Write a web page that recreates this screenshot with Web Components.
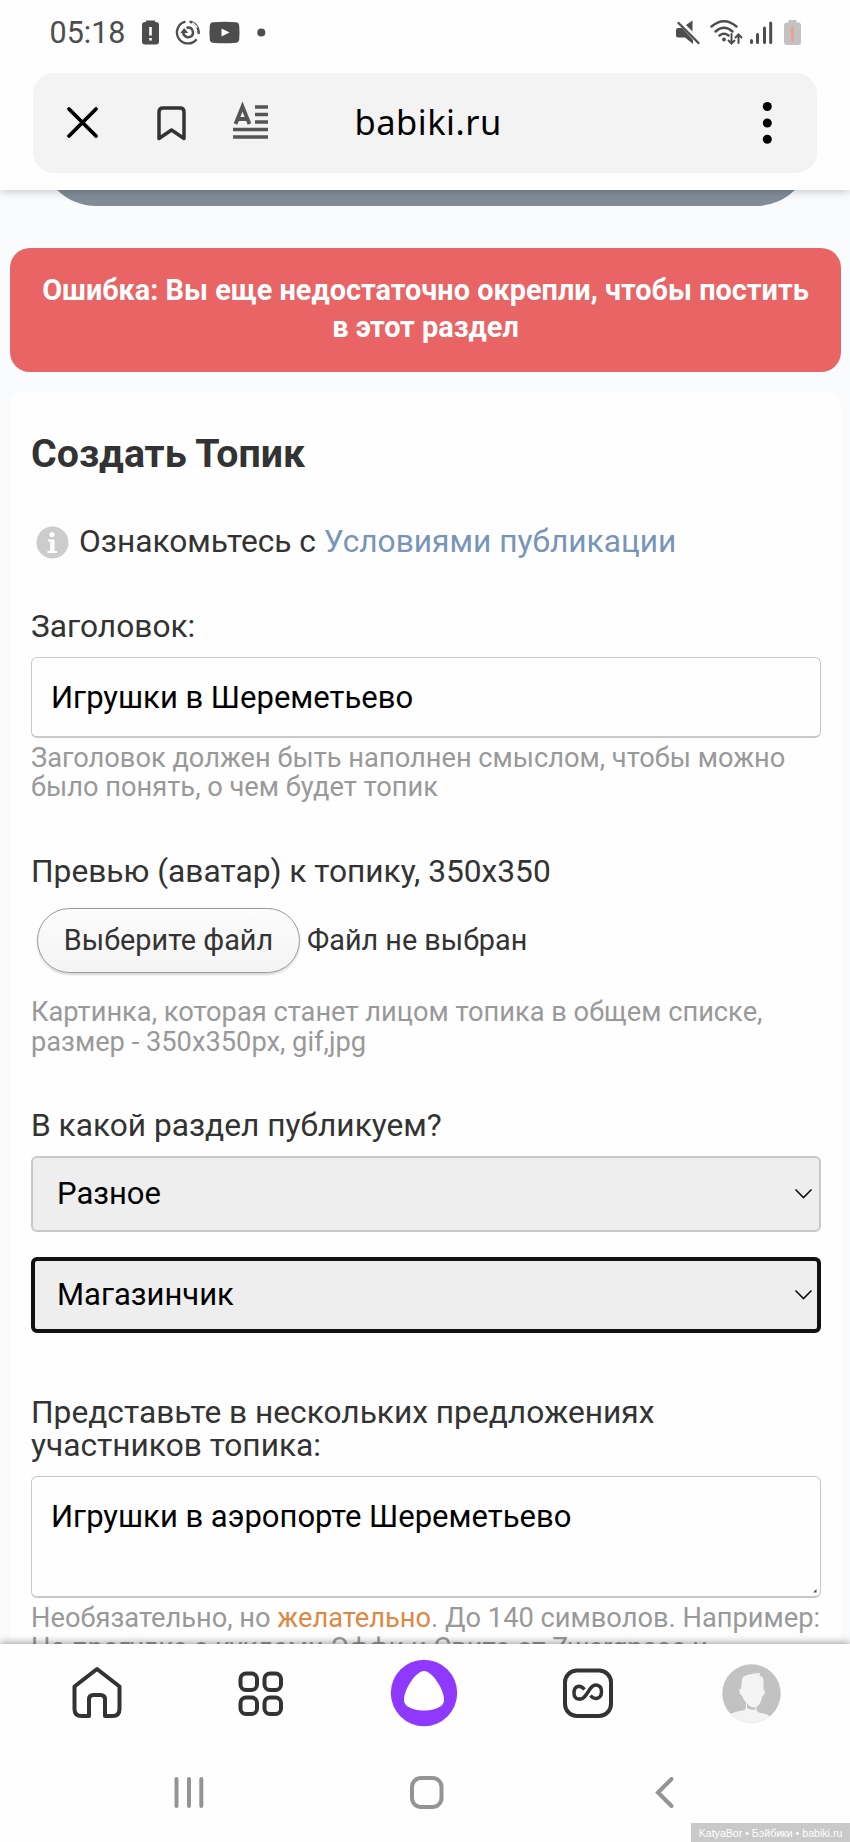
<!DOCTYPE html>
<html lang="ru">
<head>
<meta charset="utf-8">
<title>babiki.ru</title>
<style>
body { margin: 0; }
form-field b { font-weight: 400; color: #dd8844; }
</style>
</head>
<body>
<phone-screen>
    <status-bar slot="top"></status-bar>
    <url-bar slot="top">babiki.ru</url-bar>

    <cut-pill></cut-pill>
    <error-box>Ошибка: Вы еще недостаточно окрепли, чтобы постить в этот раздел</error-box>
    <topic-card>
        <span slot="title">Создать Топик</span>
        <info-line>Ознакомьтесь с <a>Условиями публикации</a></info-line>
        <form-field>
            <span slot="label">Заголовок:</span>
            <text-box>Игрушки в Шереметьево</text-box>
            <span slot="hint">Заголовок должен быть наполнен смыслом, чтобы можно было понять, о чем будет топик</span>
        </form-field>
        <form-field>
            <span slot="label">Превью (аватар) к топику, 350x350</span>
            <file-picker>Выберите файл<span slot="state">Файл не выбран</span></file-picker>
            <span slot="hint">Картинка, которая станет лицом топика в общем списке, размер - 350x350px, gif,jpg</span>
        </form-field>
        <form-field wide>
            <span slot="label">В какой раздел публикуем?</span>
            <select-box>Разное</select-box>
            <select-box focused>Магазинчик</select-box>
        </form-field>
        <form-field>
            <span slot="label">Представьте в нескольких предложениях участников топика:</span>
            <text-box multiline>Игрушки в аэропорте Шереметьево</text-box>
            <span slot="hint">Необязательно, но <b>желательно</b>. До 140 символов. Например: На прогулке с куклами Эффи и Свита от Zwergnase и</span>
        </form-field>
    </topic-card>

    <tab-bar slot="bottom"></tab-bar>
    <nav-bar slot="bottom">KatyaBor • Бэйбики • babiki.ru</nav-bar>
</phone-screen>

<script>
// Petite base : chaque composant fournit son HTML
class BaseElement extends HTMLElement {
    constructor() {
        super();
        this.attachShadow({ mode: 'open' });
    }

    connectedCallback() {
        this.shadowRoot.innerHTML = this.render();
    }
}

class PhoneScreen extends BaseElement {
    render() {
        return `
            <style>
                :host { display: flex; flex-direction: column; width: 850px; height: 1842px; overflow: hidden; background: #fefefe; font-family: Roboto, "Noto Sans", sans-serif; color: #333; }
                .top, .bottom { position: relative; z-index: 1; background: #fefefe; }
                .top { height: 190px; box-shadow: 0 1px 9px rgba(0, 0, 0, .24); }
                .view { flex: 1; min-height: 0; overflow: hidden; background: #f9fbfd; }
                .bottom { height: 198px; box-shadow: 0 -1px 8px rgba(0, 0, 0, .4); }
            </style>
            <div class="top"><slot name="top"></slot></div>
            <div class="view"><slot></slot></div>
            <div class="bottom"><slot name="bottom"></slot></div>
        `;
    }
}
customElements.define('phone-screen', PhoneScreen);

class StatusBar extends BaseElement {
    render() {
        return `
            <style>
                :host { display: flex; justify-content: space-between; height: 73px; color: #4d4d4d; }
                .time { font-size: 30.500px; line-height: 65px; padding-left: 49.500px; width: 90.500px; white-space: nowrap; }
                .left { display: flex; }
                svg { display: block; }
            </style>
            <div class="left">
                <span class="time">05:18</span>
                <svg width="130" height="73" viewBox="140 0 130 73" fill="#4d4d4d">
                    <path d="M146 22v-1.500h9v1.500h1q3 0 3 3v16.500q0 3-3 3h-11q-3 0-3-3V25q0-3 3-3z"/>
                    <path d="M150.500 27v8.500M150.500 38v2.500" stroke="#fff" stroke-width="2.600" fill="none"/>
                    <g fill="none" stroke="#4d4d4d" stroke-width="2.300">
                        <path d="M185.500 21.700A11 11 0 1 0 196.600 39.200M198.600 34A11 11 0 0 0 189.500 21.600"/>
                        <path d="M186.500 28c3.500-1.500 6.500 1 6.500 4.500 0 4.500-5 6-8 3.500-1.500-1.200-2-2.500-1.500-4.500" stroke-width="2.500"/>
                    </g>
                    <path d="M180.200 33l4-5 4 5z"/>
                    <path d="M192.300 22.500l5 5" stroke="#fefefe" stroke-width="1.500"/>
                    <path d="M213 22.300q11.500-1 23 0 3 .2 3.200 3.200.6 7 0 14-.2 3-3.200 3.200-11.500 1-23 0-3-.2-3.200-3.200-.6-7 0-14 .2-3 3.200-3.200z"/>
                    <path d="M221.500 28.500v8l8-4z" fill="#fff"/>
                    <circle cx="261.300" cy="32.500" r="4"/>
                </svg>
            </div>
            <svg width="180" height="73" viewBox="670 0 180 73" fill="#4d4d4d">
                <path d="M676 30q0-2 2-2h4l11 12v4l-8-6.500h-7q-2 0-2-2zM686 25l6.500-4.500v11z"/>
                <path d="M678.500 23l20 20" stroke="#4d4d4d" stroke-width="2.400" stroke-linecap="round"/>
                <g fill="none" stroke="#4d4d4d" stroke-width="2.500" stroke-linecap="round">
                    <path d="M711.500 26.500q12.500-10.500 25 0M715.500 31.500q8.500-7.500 17 0M719.500 35.500q4.500-3.500 9 0"/>
                    <path d="M731.500 34v9M728.500 40.500l3 3 3-3M738.500 43v-8M735.500 37.500l3-3 3 3" stroke-width="2"/>
                    <path d="M751.500 40.500v2M757.500 34.500v8M764.500 28v14.500M770.700 23v19.500" stroke-width="3"/>
                </g>
                <circle cx="724" cy="39.500" r="1.900"/>
                <path d="M788.500 22.500V20h8v2.500h1.500q3 0 3 3V42q0 3-3 3h-11q-3 0-3-3V25.500q0-3 3-3z" fill="#c2c2c2"/>
                <path d="M792.500 28v8M792.500 38.500v2" stroke="#ee9f90" stroke-width="3" stroke-linecap="round"/>
            </svg>
        `;
    }
}
customElements.define('status-bar', StatusBar);

class UrlBar extends BaseElement {
    render() {
        return `
            <style>
                :host { display: grid; grid-template-columns: 321.500px 1fr 100px; margin: 0 33px; height: 100px; border-radius: 21px; background: #f3f3f3; color: #000; }
                .host { font: 34.500px/97px "Noto Sans", sans-serif; letter-spacing: .5px; }
            </style>
            <svg width="320" height="100" viewBox="33 73 320 100" fill="none" stroke-linecap="round">
                <path d="M69 109l27 27M96 109l-27 27" stroke="#000" stroke-width="3.800"/>
                <path d="M159 138.500V112q0-4 4-4h17q4 0 4 4v26.500l-12.500-8.500z" stroke="#333" stroke-width="3.500" stroke-linejoin="round"/>
                <path d="M235.500 124l7-17.500 7 17.500M238 119h9" stroke="#555" stroke-width="3.800" stroke-linecap="butt"/>
                <path d="M255 107h13M255 114.500h13M255 122h13M233 129.500h35M233 137h35" stroke="#555" stroke-width="3.500" stroke-linecap="butt"/>
            </svg>
            <span class="host"><slot></slot></span>
            <svg width="100" height="100" viewBox="717 73 100 100">
                <circle cx="767.300" cy="106.500" r="4.500"/><circle cx="767.300" cy="123" r="4.500"/><circle cx="767.300" cy="139.300" r="4.500"/>
            </svg>
        `;
    }
}
customElements.define('url-bar', UrlBar);

class CutPill extends BaseElement {
    render() {
        return `
            <style>
                :host { display: block; height: 16px; margin: 0 39px 0 41px; overflow: hidden; }
                div { height: 110px; margin-top: -94px; border-radius: 55px; background: #808d98; }
            </style>
            <div></div>
        `;
    }
}
customElements.define('cut-pill', CutPill);

class ErrorBox extends BaseElement {
    render() {
        return `
            <style>
                :host { display: block; box-sizing: border-box; height: 124px; margin: 42px 9px 20px 10px; padding: 24px 30px 0; border-radius: 20px; background: #e86465; color: #fff; font-size: 28.900px; font-weight: 700; line-height: 37px; text-align: center; }
            </style>
            <slot></slot>
        `;
    }
}
customElements.define('error-box', ErrorBox);

class TopicCard extends BaseElement {
    render() {
        return `
            <style>
                :host { display: block; margin: 0 9px 0 10px; padding: 40px 20px 0 21px; border-radius: 15px; background: #fefefe; }
                h1 { margin: 0 0 48px; font-size: 39.300px; font-weight: 700; line-height: 44px; }
            </style>
            <h1><slot name="title"></slot></h1>
            <slot></slot>
        `;
    }
}
customElements.define('topic-card', TopicCard);

class InfoLine extends BaseElement {
    render() {
        return `
            <style>
                :host { display: flex; align-items: center; gap: 10px; margin: 0 0 50px 5px; font-size: 31.700px; line-height: 36px; }
                ::slotted(a) { color: #7795b8; }
            </style>
            <svg width="33" height="33" viewBox="0 0 33 33">
                <circle cx="16.500" cy="16.500" r="16" fill="#ccc"/>
                <circle cx="16" cy="8.500" r="2.600" fill="#fff"/>
                <path d="M12 13.500h6.500v11.500h2.500v2h-9.500v-2h2.700v-9.500h-2.200z" fill="#fff"/>
            </svg>
            <div><slot></slot></div>
        `;
    }
}
customElements.define('info-line', InfoLine);

class FormField extends BaseElement {
    render() {
        return `
            <style>
                :host { display: block; margin-bottom: 52.500px; }
                :host([wide]) { margin-bottom: 63px; }
                .label { margin-bottom: 13px; font-size: 31.700px; line-height: 33.500px; }
                .hint { margin-top: 6px; font-size: 27.250px; line-height: 29.200px; color: #999; }
            </style>
            <div class="label"><slot name="label"></slot></div>
            <slot></slot>
            <div class="hint"><slot name="hint"></slot></div>
        `;
    }
}
customElements.define('form-field', FormField);

class TextBox extends BaseElement {
    render() {
        return `
            <style>
                :host { display: block; box-sizing: border-box; height: 81.500px; padding: 0 19px; border: 1.500px solid #c8c8c8; border-bottom-width: 2px; border-radius: 6px; color: #000; font-size: 31px; line-height: 79px; }
                :host([multiline]) { height: 122.500px; display: flex; justify-content: space-between; align-items: flex-end; padding-right: 3px; }
                :host([multiline]) div { align-self: flex-start; }
                svg { display: none; }
                :host([multiline]) svg { display: block; margin-bottom: 3px; }
            </style>
            <div><slot></slot></div>
            <svg width="4" height="4"><path d="M0 3.500L3.500 0v3.500z" fill="#555"/></svg>
        `;
    }
}
customElements.define('text-box', TextBox);

class FilePicker extends BaseElement {
    render() {
        return `
            <style>
                :host { display: flex; align-items: center; gap: 7px; margin: 19.500px 0 25.500px 6px; font-size: 28.800px; line-height: 62px; }
                .btn { box-sizing: border-box; width: 263px; height: 65px; border: 1.500px solid #999; border-radius: 33px; background: linear-gradient(#fbfcfb, #f4f4f4); box-shadow: 0 2px 2px rgba(0, 0, 0, .15); text-align: center; }
            </style>
            <span class="btn"><slot></slot></span>
            <slot name="state"></slot>
        `;
    }
}
customElements.define('file-picker', FilePicker);

class SelectBox extends BaseElement {
    render() {
        return `
            <style>
                :host { display: flex; align-items: center; justify-content: space-between; box-sizing: border-box; height: 76px; margin-bottom: 25px; padding: 0 6px 0 24px; border: 2px solid #c8c8c8; border-radius: 6px; background: #eee; color: #000; font-size: 31px; }
                :host([focused]) { border: 4px solid #111; padding: 0 4px 0 22px; }
            </style>
            <span><slot></slot></span>
            <svg width="19" height="12"><path d="M1.500 1.500l8 8 8-8" fill="none" stroke="#111" stroke-width="1.600"/></svg>
        `;
    }
}
customElements.define('select-box', SelectBox);

class TabBar extends BaseElement {
    render() {
        return `
            <style>
                :host { display: grid; grid-template-columns: repeat(5, 163.600px); justify-items: center; align-items: center; height: 98px; padding-left: 15.500px; }
                svg { display: block; }
            </style>
            <svg width="52" height="54" viewBox="71 1666 52 54" fill="none" stroke="#333" stroke-width="4" stroke-linejoin="round">
                <path d="M97 1669l-22.500 17.500V1709q0 7 7 7h7.500v-16.500q0-4.500 4.500-4.500h7q4.500 0 4.500 4.500V1716h7.500q7 0 7-7v-22.500z"/>
            </svg>
            <svg width="48" height="54" viewBox="237 1666 48 54" fill="none" stroke="#333" stroke-width="4">
                <rect x="240.500" y="1673.500" width="16.500" height="16.500" rx="5.500"/><rect x="264.500" y="1673.500" width="16.500" height="16.500" rx="5.500"/>
                <rect x="240.500" y="1697.500" width="16.500" height="16.500" rx="5.500"/><rect x="264.500" y="1697.500" width="16.500" height="16.500" rx="5.500"/>
            </svg>
            <svg width="68" height="68" viewBox="0 0 68 68">
                <circle cx="34" cy="34" r="33.200" fill="#8f39ff"/>
                <path d="M34 12c8 0 20 18 20 29 0 8-12 10.500-20 10.500S14 49 14 41c0-11 12-29 20-29z" fill="#fff"/>
            </svg>
            <svg width="52" height="54" viewBox="562 1666 52 54" fill="none" stroke="#333">
                <rect x="565" y="1670.500" width="46" height="45.500" rx="12" stroke-width="4"/>
                <path d="M584.500 1689.500c-4-5-10.500-4-10.500 3.500s8 8 12 2l4-6c4-6 11.500-5 11.500 2.500 0 8-7.500 8.500-11 4" stroke-width="3.500"/>
            </svg>
            <svg width="59" height="59" viewBox="0 0 59 59">
                <clipPath id="c"><circle cx="29.500" cy="29.500" r="29.200"/></clipPath>
                <g clip-path="url(#c)">
                    <path d="M0 0h59v59H0z" fill="#c2c2c2"/>
                    <path d="M20 16q0-4 5-5 7-2 13-2l-.5 3q4 0 4 5v9q2 0 1 4l-2.500 3q-1 7-5.500 10v3q1 3 7 3.500 6 1 7 5l-5 10H12L6 51q8-4 14-4.500 4 0 4-4v-4q-3-3-4-7-2 0-2.500-4.500-.5-3 1.500-2z" fill="#f3f3f3"/>
                    <path d="M25 39q3 5 9 4.500l-1 2q-5 1-8-1.500z" fill="#c2c2c2"/>
                </g>
            </svg>
        `;
    }
}
customElements.define('tab-bar', TabBar);

class NavBar extends BaseElement {
    render() {
        return `
            <style>
                :host { display: flex; flex-direction: column; height: 100px; }
                .mark { align-self: flex-end; width: 159px; height: 19px; background: #c9c9c9; color: #fff; font: 10.600px/20px "Liberation Sans", sans-serif; text-align: center; white-space: nowrap; }
            </style>
            <svg width="850" height="81" viewBox="0 1742 850 81" fill="none" stroke="#949494" stroke-width="4" stroke-linecap="round">
                <path d="M176.500 1779v27M189 1779v27M201.300 1779v27"/>
                <rect x="412" y="1778" width="29.500" height="29" rx="9"/>
                <path d="M671.500 1779l-13.500 13.500 13.500 13.500"/>
            </svg>
            <span class="mark"><slot></slot></span>
        `;
    }
}
customElements.define('nav-bar', NavBar);
</script>
</body>
</html>
